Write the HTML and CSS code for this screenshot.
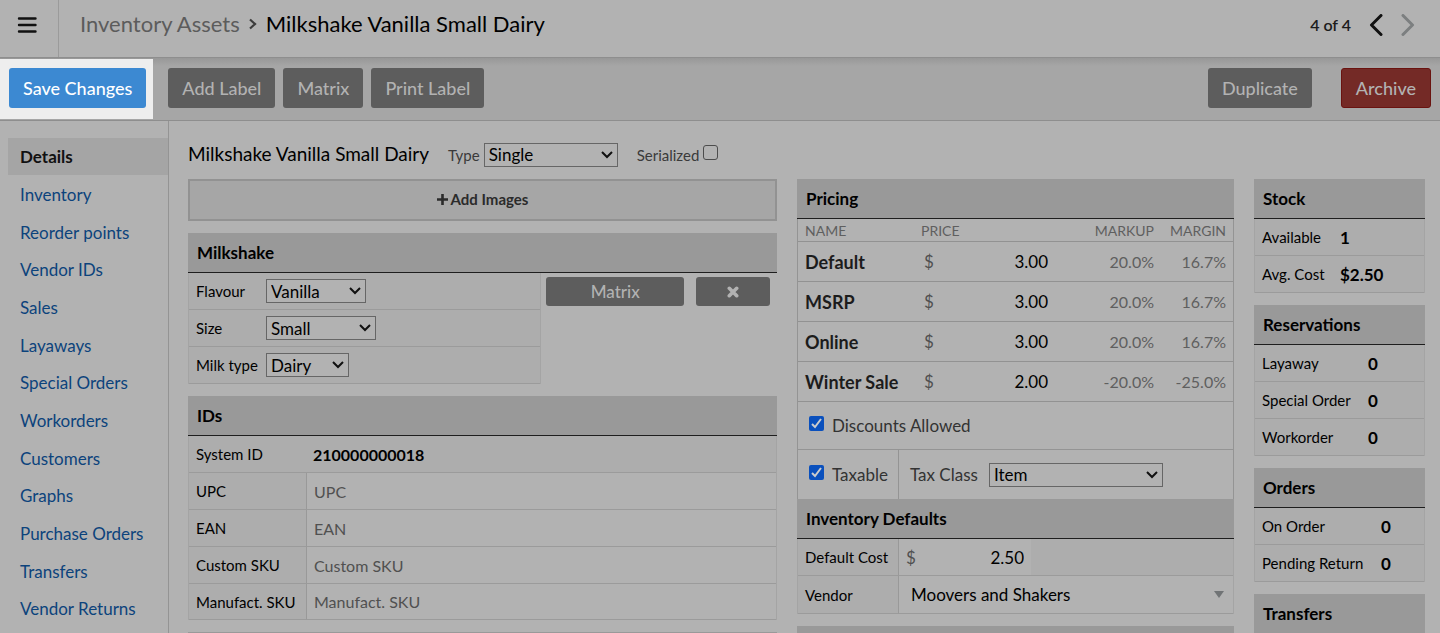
FILE: index.html
```html
<!DOCTYPE html>
<html lang="en">
<head>
    <meta charset="UTF-8">
    <meta name="viewport" content="width=device-width, initial-scale=1.0">
    <title>Milkshake Vanilla Small Dairy - Inventory Assets</title>
    <link rel="stylesheet" href="styles.css">
</head>
<body>
    <header class="topbar">
        <button class="menu-button" type="button" aria-label="Menu">
            <svg width="20" height="16" viewBox="0 0 20 16"><path d="M2 1.500h16.500M2 8h16.500M2 14.500h16.500" stroke="#111" stroke-width="2.400" stroke-linecap="round"/></svg>
        </button>
        <nav class="breadcrumb">
            <a href="#">Inventory Assets</a>
            <svg width="8" height="12" viewBox="0 0 8 12"><path d="M1 1.500l5 4.500-5 4.500" fill="none" stroke="#3c3c3c" stroke-width="2.200"/></svg>
            <span>Milkshake Vanilla Small Dairy</span>
        </nav>
        <div class="pager">
            <span>4 of 4</span>
            <button type="button" aria-label="Previous"><svg width="14" height="22" viewBox="0 0 14 22"><path d="M12 1.500L2.500 11l9.500 9.500" fill="none" stroke="#111" stroke-width="3" stroke-linecap="round" stroke-linejoin="round"/></svg></button>
            <button type="button" aria-label="Next" disabled><svg width="14" height="22" viewBox="0 0 14 22"><path d="M2 1.500l9.500 9.500L2 20.500" fill="none" stroke="#7c7f80" stroke-width="3" stroke-linecap="round" stroke-linejoin="round"/></svg></button>
        </div>
    </header>

    <div class="toolbar">
        <div class="spotlight"><button class="btn btn-save" type="button">Save Changes</button></div>
        <button class="btn" type="button">Add Label</button>
        <button class="btn" type="button">Matrix</button>
        <button class="btn" type="button">Print Label</button>
        <button class="btn btn-duplicate" type="button">Duplicate</button>
        <button class="btn btn-archive" type="button">Archive</button>
    </div>

    <div class="layout">
        <!-- Section links -->
        <nav class="sidebar">
            <ul>
                <li><a class="active" href="#">Details</a></li>
                <li><a href="#">Inventory</a></li>
                <li><a href="#">Reorder points</a></li>
                <li><a href="#">Vendor IDs</a></li>
                <li><a href="#">Sales</a></li>
                <li><a href="#">Layaways</a></li>
                <li><a href="#">Special Orders</a></li>
                <li><a href="#">Workorders</a></li>
                <li><a href="#">Customers</a></li>
                <li><a href="#">Graphs</a></li>
                <li><a href="#">Purchase Orders</a></li>
                <li><a href="#">Transfers</a></li>
                <li><a href="#">Vendor Returns</a></li>
            </ul>
        </nav>

        <main class="content">
            <div class="title-row">
                <h1>Milkshake Vanilla Small Dairy</h1>
                <label for="type">Type</label>
                <select id="type" class="select-type"><option>Single</option></select>
                <label class="serialized" for="serialized">Serialized</label>
                <input type="checkbox" id="serialized">
            </div>

            <div class="columns">
                <div class="column">
                    <button class="add-images" type="button">
                        <svg width="11" height="11" viewBox="0 0 11 11"><path d="M5.500 0v11M0 5.500h11" stroke="#2b2b2b" stroke-width="2.600"/></svg>
                        Add Images
                    </button>

                    <section>
                        <h2>Milkshake</h2>
                        <div class="matrix">
                            <table class="rows matrix-table">
                                <tr><th><label for="flavour">Flavour</label></th><td><select id="flavour" class="select-flavour"><option>Vanilla</option></select></td></tr>
                                <tr><th><label for="size">Size</label></th><td><select id="size" class="select-size"><option>Small</option></select></td></tr>
                                <tr><th><label for="milk">Milk type</label></th><td><select id="milk" class="select-milk"><option>Dairy</option></select></td></tr>
                            </table>
                            <button class="btn btn-small btn-matrix" type="button">Matrix</button>
                            <button class="btn btn-small btn-remove" type="button" aria-label="Remove">
                                <svg width="12" height="12" viewBox="0 0 12 12"><path d="M2.300 2.300l7.400 7.400M9.700 2.300l-7.400 7.400" stroke="#b2b2b2" stroke-width="3.600" stroke-linecap="round"/></svg>
                            </button>
                        </div>
                    </section>

                    <section>
                        <h2>IDs</h2>
                        <table class="rows ids-table">
                            <tr><th>System ID</th><td class="system-id">210000000018</td></tr>
                            <tr><th><label for="upc">UPC</label></th><td class="field"><input type="text" id="upc" placeholder="UPC"></td></tr>
                            <tr><th><label for="ean">EAN</label></th><td class="field"><input type="text" id="ean" placeholder="EAN"></td></tr>
                            <tr><th><label for="custom">Custom SKU</label></th><td class="field"><input type="text" id="custom" placeholder="Custom SKU"></td></tr>
                            <tr><th><label for="manufact">Manufact. SKU</label></th><td class="field"><input type="text" id="manufact" placeholder="Manufact. SKU"></td></tr>
                        </table>
                    </section>
                    <div class="next-section"></div>
                </div>

                <div class="column">
                    <div>
                        <section>
                            <h2>Pricing</h2>
                            <table class="pricing">
                                <thead>
                                    <tr><th>NAME</th><th colspan="2">PRICE</th><th class="num">MARKUP</th><th class="num">MARGIN</th></tr>
                                </thead>
                                <tbody>
                                    <tr><th><label for="p1">Default</label></th><td class="currency">$</td><td><input type="text" id="p1" value="3.00"></td><td class="num">20.0%</td><td class="num">16.7%</td></tr>
                                    <tr><th><label for="p2">MSRP</label></th><td class="currency">$</td><td><input type="text" id="p2" value="3.00"></td><td class="num">20.0%</td><td class="num">16.7%</td></tr>
                                    <tr><th><label for="p3">Online</label></th><td class="currency">$</td><td><input type="text" id="p3" value="3.00"></td><td class="num">20.0%</td><td class="num">16.7%</td></tr>
                                    <tr><th><label for="p4">Winter Sale</label></th><td class="currency">$</td><td><input type="text" id="p4" value="2.00"></td><td class="num">-20.0%</td><td class="num">-25.0%</td></tr>
                                </tbody>
                            </table>
                            <div class="option-row discounts">
                                <div class="option"><input type="checkbox" id="discounts" checked><label for="discounts">Discounts Allowed</label></div>
                            </div>
                            <div class="option-row">
                                <div class="option taxable"><input type="checkbox" id="taxable" checked><label for="taxable">Taxable</label></div>
                                <div class="option tax-class"><label for="taxclass">Tax Class</label><select id="taxclass" class="select-tax"><option>Item</option></select></div>
                            </div>
                        </section>
                        <section>
                            <h2>Inventory Defaults</h2>
                            <table class="rows defaults-table">
                                <tr><th><label for="cost">Default Cost</label></th><td class="field"><div class="cost"><span>$</span><input type="text" id="cost" value="2.50"></div></td></tr>
                                <tr><th><label for="vendor">Vendor</label></th><td class="field"><select id="vendor" class="select-vendor"><option>Moovers and Shakers</option></select></td></tr>
                            </table>
                        </section>
                    </div>
                    <div class="next-section"></div>
                </div>

                <div class="column">
                    <section>
                        <h2>Stock</h2>
                        <table class="rows stats stats-stock">
                            <tr><th>Available</th><td>1</td></tr>
                            <tr><th>Avg. Cost</th><td>$2.50</td></tr>
                        </table>
                    </section>
                    <section>
                        <h2>Reservations</h2>
                        <table class="rows stats stats-reservations">
                            <tr><th>Layaway</th><td>0</td></tr>
                            <tr><th>Special Order</th><td>0</td></tr>
                            <tr><th>Workorder</th><td>0</td></tr>
                        </table>
                    </section>
                    <section>
                        <h2>Orders</h2>
                        <table class="rows stats stats-orders">
                            <tr><th>On Order</th><td>0</td></tr>
                            <tr><th>Pending Return</th><td>0</td></tr>
                        </table>
                    </section>
                    <section>
                        <h2>Transfers</h2>
                    </section>
                </div>
            </div>
        </main>
    </div>
</body>
</html>
```

FILE: styles.css
```css
* {
    box-sizing: border-box;
}

body {
    margin: 0;
    height: 100vh;
    overflow: hidden;
    display: flex;
    flex-direction: column;
    background: #b2b2b2;
    color: #000;
    font-family: Lato, sans-serif;
    font-size: 15px;
}

button, input, select {
    font-family: inherit;
    margin: 0;
}

button {
    border: none;
    background: none;
    padding: 0;
    cursor: pointer;
}

svg {
    display: block;
    flex: none;
}

/* Top bar */
.topbar {
    flex: none;
    display: flex;
    align-items: center;
    height: 58px;
    border-bottom: 1px solid #8e8e8e;
}

.menu-button {
    display: flex;
    align-items: center;
    width: 59px;
    height: 57px;
    padding: 0 0 8px 17px;
    border-right: 1px solid #9b9b9b;
}

.breadcrumb {
    display: flex;
    align-items: center;
    gap: 9px;
    padding: 0 0 10px 21px;
    font-size: 22px;
}

.breadcrumb a {
    color: #5c5c5c;
    text-decoration: none;
}

.pager {
    display: flex;
    align-items: center;
    gap: 18px;
    margin-left: auto;
    padding: 0 25px 8px 0;
    font-size: 16px;
    font-weight: 600;
    color: #1c1c1c;
}

/* Action buttons */
.toolbar {
    flex: none;
    display: flex;
    align-items: flex-start;
    gap: 8px;
    height: 63px;
    padding: 1px 9px 0 0;
    background: linear-gradient(#989898, #a6a6a6 8px);
    border-bottom: 1px solid #8e8e8e;
}

.spotlight {
    display: flex;
    margin-right: 7px;
    padding: 0 7px 11px 9px;
    background: #eee;
}

.btn {
    height: 40px;
    margin-top: 9px;
    padding: 0 14px;
    border-radius: 3px;
    background: #5d5d5d;
    color: #b2b2b2;
    font-size: 18px;
    font-weight: 500;
}

.btn-save {
    background: #3c89d2;
    color: #fff;
}

.btn-duplicate {
    margin-left: auto;
}

.btn-archive {
    margin-left: 21px;
    background: #742a26;
    border: 1px solid #6a1310;
}

/* Sidebar */
.layout {
    flex: 1;
    display: flex;
    min-height: 0;
}

.sidebar {
    flex: none;
    width: 169px;
    padding: 17px 0 0 8px;
    border-right: 1px solid #949494;
}

.sidebar ul {
    list-style: none;
    margin: 0;
    padding: 0;
}

.sidebar li {
    height: 38px;
}

.sidebar li:nth-child(3n+1) {
    height: 37px;
}

.sidebar a {
    display: flex;
    align-items: center;
    height: 100%;
    padding-left: 12px;
    color: #0c437c;
    font-size: 17px;
    text-decoration: none;
}

.sidebar a.active {
    background: #a5a5a5;
    color: #111;
    font-weight: bold;
}

/* Main content */
.content {
    flex: 1;
    min-width: 0;
    padding: 17px 15px 0 19px;
}

.title-row {
    display: flex;
    align-items: center;
    height: 34px;
    margin-bottom: 7px;
    padding-bottom: 1px;
    color: #3a3a3a;
}

h1 {
    margin: 0 19px 0 0;
    padding-bottom: 2px;
    font-size: 19px;
    font-weight: normal;
    color: #000;
}

.serialized {
    margin: 0 4px 0 19px;
}

.columns {
    display: grid;
    grid-template-columns: 589fr 437fr 171fr;
    gap: 20px;
    align-items: start;
}

.column {
    display: flex;
    flex-direction: column;
    gap: 12px;
    min-width: 0;
}

h2 {
    display: flex;
    align-items: center;
    height: 40px;
    margin: 0;
    padding: 0 9px 1px;
    background: #999;
    border-bottom: 1px solid #1e1e1e;
    font-size: 17px;
    font-weight: bold;
}

.add-images {
    display: flex;
    align-items: center;
    justify-content: center;
    gap: 3px;
    height: 42px;
    padding-bottom: 2px;
    background: #a6a6a6;
    border: 2px solid #929292;
    color: #2b2b2b;
    font-size: 15px;
    font-weight: bold;
}

.next-section {
    height: 40px;
    background: #999;
}

/* Form elements */
select {
    height: 24px;
    padding: 0 4px;
    appearance: none;
    border: 1px solid #666;
    border-radius: 0;
    background: #b2b2b2 url("data:image/svg+xml,%3Csvg xmlns='http://www.w3.org/2000/svg' width='12' height='8'%3E%3Cpath d='M1 1l5 5 5-5' fill='none' stroke='%23111' stroke-width='2'/%3E%3C/svg%3E") no-repeat right 4px center;
    color: #000;
    font-size: 17px;
}

.select-type {
    width: 134px;
    margin-left: 4px;
}

.select-flavour {
    width: 100px;
}

.select-size {
    width: 110px;
}

.select-milk {
    width: 83px;
}

.select-tax {
    width: 174px;
    margin-left: 11px;
}

input[type="text"] {
    display: block;
    width: 100%;
    height: 36px;
    padding: 0 7px;
    border: none;
    background: none;
    color: #000;
    font-size: 17px;
}

input::placeholder {
    color: #505050;
}

input[type="checkbox"] {
    appearance: none;
    flex: none;
    width: 15px;
    height: 15px;
    margin-bottom: 4px;
    border: 1px solid #4c4c4c;
    border-radius: 3px;
}

input[type="checkbox"]:checked {
    border: none;
    border-radius: 2px;
    background: #0a50bd url("data:image/svg+xml,%3Csvg xmlns='http://www.w3.org/2000/svg' width='15' height='15'%3E%3Cpath d='M3 8l3 3 6-8' fill='none' stroke='%23ccc' stroke-width='2'/%3E%3C/svg%3E");
}

/* Label / value tables */
table {
    width: 100%;
    border-collapse: separate;
    border-spacing: 0;
}

th, td {
    padding: 0;
    text-align: left;
    font-weight: normal;
}

.rows {
    background: #adadad;
    border: 1px solid #a4a4a4;
    border-width: 0 1px;
}

.rows th, .rows td {
    height: 37px;
    border-bottom: 1px solid #9b9b9b;
}

.rows th {
    padding-left: 7px;
}

.rows .field {
    background: #b2b2b2;
    border-left: 1px solid #999;
}

.matrix {
    display: flex;
    align-items: flex-start;
}

.matrix-table {
    width: 60%;
}

.matrix-table th {
    width: 77px;
}

.matrix-table select {
    display: block;
}

.btn-small {
    display: flex;
    align-items: center;
    justify-content: center;
    height: 29px;
    margin-top: 4px;
    font-size: 17px;
}

.btn-matrix {
    flex: 1;
    margin-left: 5px;
    margin-right: 12px;
}

.btn-remove {
    width: 74px;
    margin-right: 7px;
}

.ids-table th {
    width: 117px;
}

.ids-table tr:last-child > * {
    height: 36px;
}

.ids-table input[type="text"] {
    height: 35px;
    font-size: 16px;
}

.ids-table .system-id {
    padding-left: 7px;
    font-size: 16px;
    font-weight: bold;
}

/* Pricing */
.pricing {
    border: 1px solid #949494;
    border-width: 0 1px;
    font-size: 17px;
}

.pricing th, .pricing td {
    height: 40px;
    border-bottom: 1px solid #929292;
}

.pricing thead th {
    height: 23px;
    color: #5f5f5f;
    font-size: 14px;
}

.pricing th:first-child {
    width: 123px;
    padding-left: 7px;
}

.pricing tbody th {
    font-size: 18px;
    font-weight: bold;
    color: #1c1c1c;
}

.pricing .currency {
    width: 24px;
    padding-left: 3px;
    color: #505050;
}

.pricing input[type="text"] {
    width: 110px;
    text-align: right;
}

.pricing .num {
    padding-right: 7px;
    text-align: right;
    color: #5f5f5f;
}

.pricing td.num {
    font-size: 16px;
}

.pricing .num:last-child {
    width: 72px;
}

.option-row {
    display: flex;
    height: 49px;
    border: 1px solid #949494;
    border-width: 0 1px;
    color: #333;
    font-size: 17px;
}

.option-row.discounts {
    height: 48px;
    border-bottom-width: 1px;
}

.option {
    display: flex;
    align-items: center;
    gap: 8px;
    padding-left: 11px;
}

.taxable {
    width: 101px;
    border-right: 1px solid #949494;
}

.tax-class {
    gap: 0;
}

.defaults-table th {
    width: 100px;
}

.defaults-table tr:first-child .field {
    background: linear-gradient(to right, #b2b2b2 132px, #adadad 132px);
}

.defaults-table tr:last-child > * {
    height: 38px;
}

.cost {
    display: flex;
    align-items: center;
    width: 132px;
    padding-left: 7px;
    font-size: 17px;
    color: #505050;
}

.cost input[type="text"] {
    text-align: right;
}

.select-vendor {
    display: block;
    width: 100%;
    height: 36px;
    padding: 0 12px;
    border: none;
    background: url("data:image/svg+xml,%3Csvg xmlns='http://www.w3.org/2000/svg' width='10' height='7'%3E%3Cpath d='M0 0h10L5 7z' fill='%23707375'/%3E%3C/svg%3E") no-repeat right 9px center;
}

/* Stats */
.stats td {
    font-size: 17px;
    font-weight: bold;
}

.stats-stock th {
    width: 85px;
}

.stats-reservations th {
    width: 113px;
}

.stats-orders th {
    width: 126px;
}
```
